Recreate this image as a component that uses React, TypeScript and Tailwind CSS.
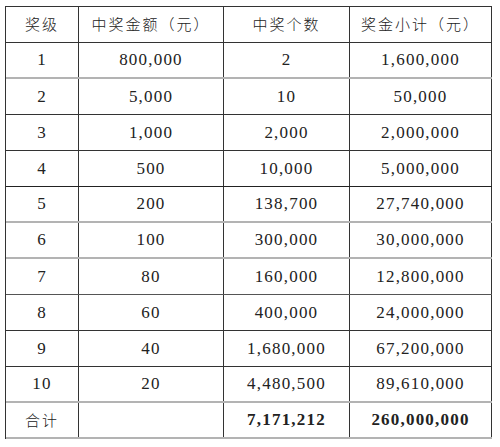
const rows = [
  { lv: "1", amt: "800,000", cnt: "2", sum: "1,600,000", line: "border-b-2 border-b-[#b3b3b3]" },
  { lv: "2", amt: "5,000", cnt: "10", sum: "50,000", line: "border-b border-b-[#333]" },
  { lv: "3", amt: "1,000", cnt: "2,000", sum: "2,000,000", line: "border-b border-b-[#333]" },
  { lv: "4", amt: "500", cnt: "10,000", sum: "5,000,000", line: "border-b border-b-[#222]" },
  { lv: "5", amt: "200", cnt: "138,700", sum: "27,740,000", line: "border-b-2 border-b-[#b3b3b3]" },
  { lv: "6", amt: "100", cnt: "300,000", sum: "30,000,000", line: "border-b-2 border-b-[#b3b3b3]" },
  { lv: "7", amt: "80", cnt: "160,000", sum: "12,800,000", line: "border-b border-b-[#555]" },
  { lv: "8", amt: "60", cnt: "400,000", sum: "24,000,000", line: "border-b border-b-[#333]" },
  { lv: "9", amt: "40", cnt: "1,680,000", sum: "67,200,000", line: "border-b border-b-[#333]" },
  { lv: "10", amt: "20", cnt: "4,480,500", sum: "89,610,000", line: "border-b-2 border-b-[#b3b3b3]" },
];

function Num({ children, bold }: { children?: React.ReactNode; bold?: boolean }) {
  return (
    <div className="flex items-center justify-center border-r border-r-[#333]">
      <span
        className={
          bold
            ? "font-['Liberation_Serif'] text-[17px] tracking-[1.2px] font-bold"
            : "font-['Liberation_Serif'] text-[17px] tracking-[1.2px]"
        }
      >
        {children}
      </span>
    </div>
  );
}

function Cjk({ children }: { children?: React.ReactNode }) {
  return (
    <div className="flex items-center justify-center border-r border-r-[#333]">
      <span className="font-['Noto_Sans_CJK_SC'] text-[15px] tracking-[2px] font-light">{children}</span>
    </div>
  );
}

export default function App() {
  return (
    <div className="w-[500px] h-[447px] bg-white pt-[6px] pl-[5px] text-[#222]">
      <div className="w-[487px] border-t border-l border-[#333]">
        <div className="grid grid-cols-[73px_145px_126px_142px] h-9 border-b border-b-[#333]">
          <Cjk>奖级</Cjk>
          <Cjk>中奖金额（元）</Cjk>
          <Cjk>中奖个数</Cjk>
          <Cjk>奖金小计（元）</Cjk>
        </div>
        {rows.map((r) => (
          <div key={r.lv} className={`grid grid-cols-[73px_145px_126px_142px] h-9 ${r.line}`}>
            <Num>{r.lv}</Num>
            <Num>{r.amt}</Num>
            <Num>{r.cnt}</Num>
            <Num>{r.sum}</Num>
          </div>
        ))}
        <div className="grid grid-cols-[73px_145px_126px_142px] h-9 border-b-2 border-b-[#b3b3b3]">
          <Cjk>合计</Cjk>
          <Num />
          <Num bold>7,171,212</Num>
          <Num bold>260,000,000</Num>
        </div>
      </div>
    </div>
  );
}
